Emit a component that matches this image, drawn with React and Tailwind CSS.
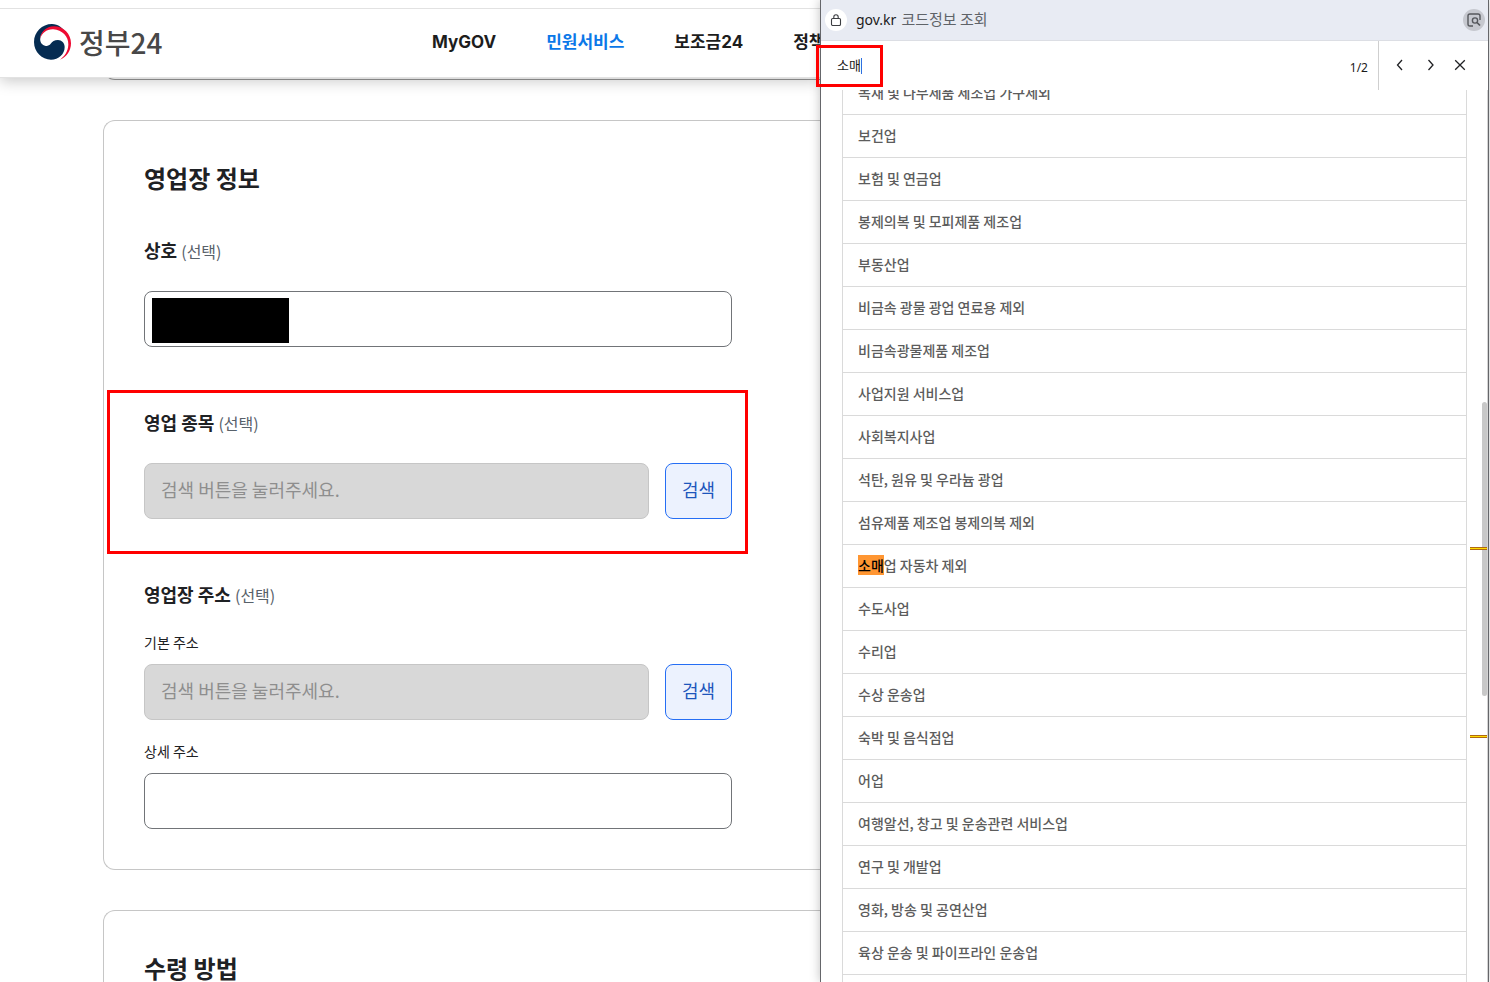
const industries = [
  "목재 및 나무제품 제조업 가구제외",
  "보건업",
  "보험 및 연금업",
  "봉제의복 및 모피제품 제조업",
  "부동산업",
  "비금속 광물 광업 연료용 제외",
  "비금속광물제품 제조업",
  "사업지원 서비스업",
  "사회복지사업",
  "석탄, 원유 및 우라늄 광업",
  "섬유제품 제조업 봉제의복 제외",
  "소매업 자동차 제외",
  "수도사업",
  "수리업",
  "수상 운송업",
  "숙박 및 음식점업",
  "어업",
  "여행알선, 창고 및 운송관련 서비스업",
  "연구 및 개발업",
  "영화, 방송 및 공연산업",
  "육상 운송 및 파이프라인 운송업",
];

const navItems = [
  { label: "MyGOV" },
  { label: "민원서비스", active: true },
  { label: "보조금24" },
  { label: "정책정보" },
];

const QUERY = "소매";

function GovLogo() {
  return (
    <svg className="h-9 w-[37px] shrink-0" viewBox="12 15 111 108" aria-hidden="true">
      <path
        fill="#052c52"
        d="M110 46C100 26 84 15 66 15C36 15 12 39 12 69C12 99 36 122 63 122C86 122 104 106 104 84C104 72 95 63 84 63C73 63 67 68 62 74C58 79 52 82 45 80C34 77 29 66 31 56C34 38 50 26 68 26C86 26 99 33 110 46Z"
      />
      <path
        fill="#ee0a32"
        d="M30 60C32 40 48 22 72 22C101 22 123 45 123 73C123 95 110 114 90 122C104 111 114 97 115 77C116 52 96 33 70 31C50 30 36 42 30 60Z"
      />
    </svg>
  );
}

function PageSearchIcon() {
  return (
    <svg className="size-4" viewBox="0 0 16 16" fill="none" stroke="#55575c" strokeWidth="1.4" aria-hidden="true">
      <path d="M7 14H4Q2 14 2 12V4Q2 2 4 2H12Q14 2 14 4V8" />
      <circle cx="9" cy="8.5" r="2.6" />
      <path d="M11 10.5L14 13.5" strokeWidth="1.7" />
    </svg>
  );
}

function LockIcon() {
  return (
    <svg className="h-3 w-3" viewBox="0 0 12 12" fill="none" stroke="#3c3e42" strokeWidth="1.1" aria-hidden="true">
      <rect x="1.5" y="4.5" width="9" height="7" rx="1.2" />
      <path d="M3.8 4.5V3a2.2 2.2 0 0 1 4.4 0v1.5" />
    </svg>
  );
}

function FindIcon({ d }) {
  return (
    <svg className="size-3" viewBox="0 0 12 12" fill="none" stroke="#202124" strokeWidth="1.3" aria-hidden="true">
      <path d={d} />
    </svg>
  );
}

function FieldLabel({ htmlFor, children }) {
  return (
    <label htmlFor={htmlFor} className="block text-lg leading-7 font-bold text-[#1e2124]">
      {children} <span className="text-base leading-7 font-normal text-[#58616a]">(선택)</span>
    </label>
  );
}

function SearchField({ id }) {
  return (
    <div className="flex gap-4">
      <input
        id={id}
        disabled
        placeholder="검색 버튼을 눌러주세요."
        className="h-14 min-w-0 flex-1 rounded-lg border border-[#c6c6c6] bg-[#d8d8d8] px-4 pb-1 text-lg placeholder:text-[#8e8e8e]"
      />
      <button className="h-14 w-[67px] rounded-lg border border-[#256ef4] bg-[#ecf2fe] pb-1 text-lg text-[#1d56bc]">
        검색
      </button>
    </div>
  );
}

function Header() {
  return (
    <header className="relative z-10 shrink-0 bg-white pt-2 shadow-[0_3px_14px_rgba(0,0,0,0.22)]">
      <div className="flex h-[70px] items-center border-y border-[#e2e2e2] pb-0.5 pl-[34px]">
        <a href="#home" className="flex w-[398px] shrink-0 items-center gap-2 text-[28px] leading-9 font-medium text-[#484848]">
          <GovLogo />
          정부24
        </a>
        <nav className="flex gap-[50px] font-['Inter','Noto_Sans_CJK_KR',sans-serif] text-[17px] leading-7 font-bold whitespace-nowrap">
          {navItems.map((item) => (
            <a key={item.label} href="#menu" className={item.active ? "text-[#0b78e8]" : "text-[#1d1d1d]"}>
              {item.label}
            </a>
          ))}
        </nav>
      </div>
    </header>
  );
}

function FormPage() {
  return (
    <div className="flex min-w-0 flex-1 flex-col overflow-hidden bg-white">
      <Header />
      <main className="flex flex-col gap-10 pl-[103px]">
        <div className="-mt-6 h-[26px] rounded-bl-xl border-b border-l border-[#999]" />
        <section className="rounded-l-xl border-y border-l border-[#c6c6c6] p-10 pt-[39px]">
          <h2 className="text-2xl leading-9 font-bold text-[#1e2124]">영업장 정보</h2>
          <div className="max-w-[588px]">
            <div className="mt-10">
              <FieldLabel htmlFor="shop-name">상호</FieldLabel>
              <div className="relative mt-[26px]">
                <input id="shop-name" className="block h-14 w-full rounded-lg border border-[#717478] px-4 text-lg" />
                <span className="absolute top-[7px] left-2 h-[45px] w-[137px] bg-black" />
              </div>
            </div>
            <div className="relative mt-[61px]">
              <FieldLabel htmlFor="shop-type">영업 종목</FieldLabel>
              <div className="mt-[26px]">
                <SearchField id="shop-type" />
              </div>
              <div className="pointer-events-none absolute -top-[18px] -right-4 -bottom-[35px] -left-[37px] border-3 border-[#f00]" />
            </div>
            <div className="mt-[61px]">
              <FieldLabel htmlFor="shop-address">영업장 주소</FieldLabel>
              <label htmlFor="shop-address" className="mt-[23px] mb-3 block text-sm text-[#1e2124]">
                기본 주소
              </label>
              <SearchField id="shop-address" />
              <label htmlFor="shop-detail" className="mt-[21px] mb-3 block text-sm text-[#1e2124]">
                상세 주소
              </label>
              <input id="shop-detail" className="block h-14 w-full rounded-lg border border-[#717478] px-4 text-lg" />
            </div>
          </div>
        </section>
        <section className="rounded-l-xl border-y border-l border-[#c6c6c6] p-10 pt-[39px]">
          <h2 className="text-2xl leading-9 font-bold text-[#1e2124]">수령 방법</h2>
        </section>
      </main>
    </div>
  );
}

function IndustryName({ name }) {
  if (!name.startsWith(QUERY)) return name;
  return (
    <>
      <mark className="bg-[#ff9632] text-black">{QUERY}</mark>
      {name.slice(QUERY.length)}
    </>
  );
}

function CodePopup() {
  return (
    <aside className="relative z-20 mr-px flex w-[669px] shrink-0 flex-col border-x border-[#65666a] bg-white shadow-[0_0_10px_rgba(0,0,0,0.25)]">
      <div className="flex h-[41px] shrink-0 items-center border-b border-[#dcdee4] bg-[#e8ebf3] pr-[3px] pl-1">
        <span className="flex size-[22px] items-center justify-center rounded-full bg-white">
          <LockIcon />
        </span>
        <span className="ml-[9px] font-['Noto_Sans','Noto_Sans_CJK_KR',sans-serif] text-sm text-[#1b1b1b]">gov.kr</span>
        <span className="ml-[5px] pb-0.5 text-[15px] leading-5 text-[#5f6368]">코드정보 조회</span>
        <button aria-label="페이지에서 찾기" className="ml-auto flex size-[22px] items-center justify-center rounded-full bg-[#c6c8cf]">
          <PageSearchIcon />
        </button>
      </div>

      <div className="relative flex h-[49px] shrink-0 items-center">
        <input
          aria-label="찾기"
          defaultValue={QUERY}
          className="ml-4 w-6 pb-0.5 text-[13px] leading-5 text-[#1b1b1b] outline-none"
        />
        <span className="h-4 w-px bg-[#2f6fe0]" />
        <span className="mt-1 ml-auto pr-2.5 font-['Noto_Sans',sans-serif] text-xs text-[#1b1b1b]">1/2</span>
        <div className="flex h-full items-center border-l border-[#cfcfcf] pr-[22px] pb-px pl-[15px]">
          <div className="flex gap-[18px]">
            <button aria-label="이전"><FindIcon d="M8 1L3.5 6L8 11" /></button>
            <button aria-label="다음"><FindIcon d="M4.5 1L9 6L4.5 11" /></button>
            <button aria-label="닫기"><FindIcon d="M1.2 1.2L10.8 10.8M10.8 1.2L1.2 10.8" /></button>
          </div>
        </div>
        <div className="pointer-events-none absolute top-1 -left-[5px] h-[42px] w-[67px] border-3 border-[#f00]" />
      </div>

      <div className="relative min-h-0 flex-1 overflow-hidden border-r border-[#d4d4d4] pr-5 pl-[21px]">
        <ul className="-mt-[18px] min-h-full border-x border-[#dadada] pb-[18px]">
          {industries.map((name) => (
            <li key={name} className="border-b border-[#dadada]">
              <button className="block h-[42px] w-full px-[15px] pb-[3px] text-left text-sm font-medium text-[#5c5c5c]">
                <IndustryName name={name} />
              </button>
            </li>
          ))}
        </ul>
        <span className="absolute top-[312px] right-0 h-[294px] w-[5px] rounded-full bg-[#c8c8c8]" />
        <span className="absolute top-[457px] -right-px h-[3px] w-[18px] border-y border-[#b06a10] bg-[#ffdd00]" />
        <span className="absolute top-[645px] -right-px h-[3px] w-[18px] border-y border-[#b06a10] bg-[#ffdd00]" />
      </div>
    </aside>
  );
}

export default function App() {
  return (
    <div className="flex h-screen overflow-hidden bg-white font-['Noto_Sans_CJK_KR',sans-serif]">
      <FormPage />
      <CodePopup />
    </div>
  );
}
